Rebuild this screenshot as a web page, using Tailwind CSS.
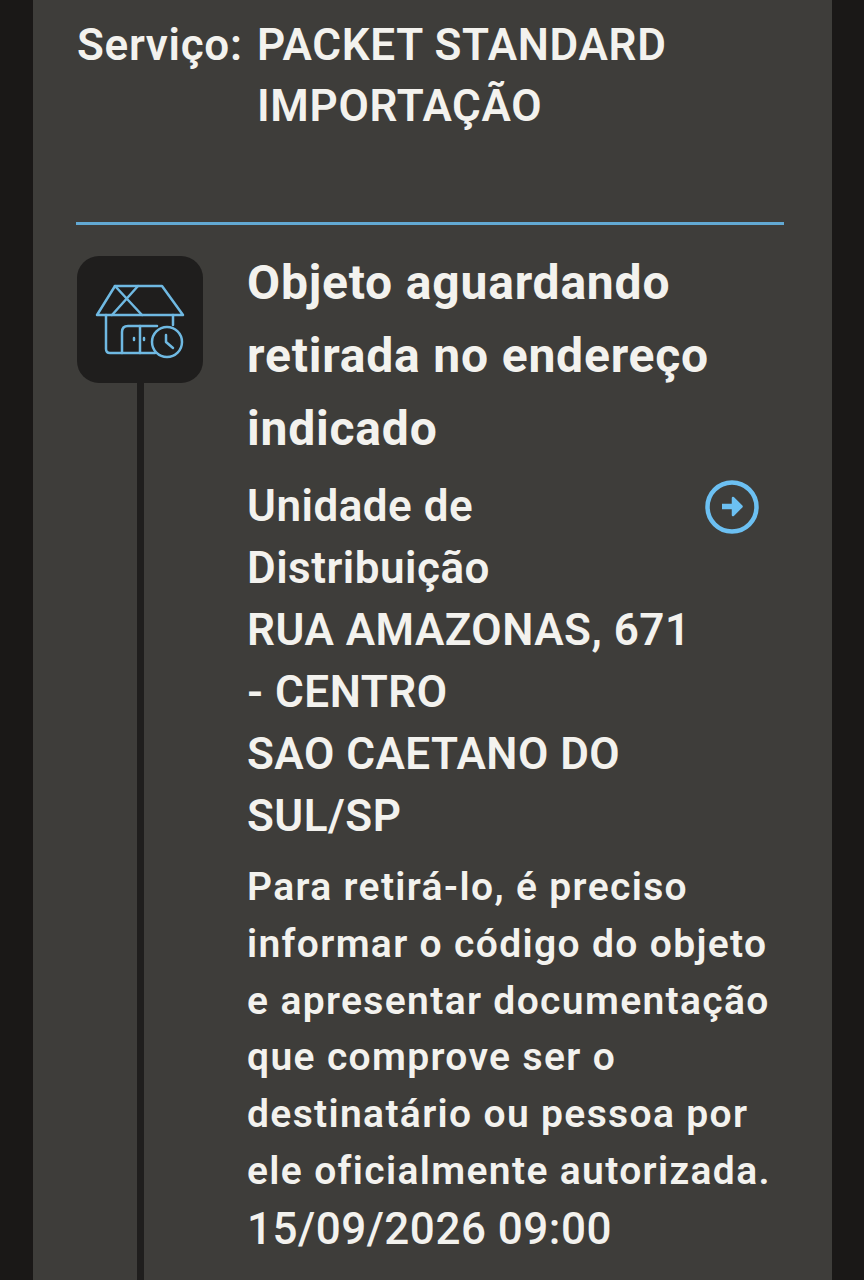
<!DOCTYPE html>
<html lang="pt-BR">

<head>
    <meta charset="UTF-8">
    <meta name="viewport" content="width=device-width, initial-scale=1.0">
    <title>Rastreamento</title>
    <script src="https://cdn.jsdelivr.net/npm/@tailwindcss/browser@4"></script>
</head>

<body class="w-[864px] h-[1280px] overflow-hidden bg-[#1a1817] font-['Roboto',sans-serif] font-semibold text-[#f3f2ee]">
    <div class="ml-[33px] w-[799px] h-[1280px] bg-[#3e3d3a] pl-[44px] pr-[49px] overflow-hidden">
        <div class="flex pt-[15px] text-[44px] leading-[61px] tracking-[0.7px] h-[222px]">
            <span class="w-[180px] shrink-0">Serviço:</span>
            <span class="w-[440px]">PACKET STANDARD IMPORTAÇÃO</span>
        </div>
        <div class="h-[3px] -ml-[1px] -mr-[1px] bg-[#62a9d3]"></div>
        <div class="flex mt-[31px]">
            <div class="w-[126px] shrink-0 flex flex-col items-center">
                <div class="w-[126px] h-[127px] shrink-0 rounded-[22px] bg-[#1f1e1d]">
                    <svg width="126" height="127" viewBox="0 0 126 127" fill="none" stroke="#6fb9e2" stroke-width="2.5" stroke-linecap="round" stroke-linejoin="round">
                        <path d="M20 59 L38 30 H85 L106 59 Z" />
                        <path d="M38 30 L65 59 M61 30 L35 59" />
                        <path d="M29 59 V93 Q29 97 33 97 H78" />
                        <path d="M96 59 V69" />
                        <path d="M45 97 V76 Q45 70 51 70 H80" />
                        <path d="M63 70 V97" />
                        <path d="M57 82 V84 M67 82 V84" />
                        <circle cx="90" cy="86" r="15" fill="#1f1e1d" />
                        <path d="M89 79 V86 L96 92" />
                    </svg>
                </div>
                <div class="w-[7px] h-[1000px] bg-[#1f1e1d]"></div>
            </div>
            <div class="ml-[44px] w-[530px] shrink-0">
                <h2 class="text-[48px] font-bold leading-[73px] tracking-[0.8px] w-[500px] -mt-[10px]">Objeto aguardando retirada no endereço indicado</h2>
                <div class="flex mt-[10px]">
                    <p class="w-[450px] text-[44px] leading-[62px] tracking-[0.5px]">Unidade de<br>Distribuição<br>RUA AMAZONAS, 671<br>- CENTRO<br>SAO CAETANO DO<br>SUL/SP</p>
                    <svg class="ml-[8px] mt-[5px]" width="54" height="54" viewBox="0 0 54 54" fill="none">
                        <circle cx="27" cy="27" r="24.5" stroke="#6cc0f2" stroke-width="4.5" />
                        <path d="M17 26.5 H29" stroke="#6cc0f2" stroke-width="5.5" />
                        <path d="M28 18 L36.5 26.5 L28 35 Z" fill="#6cc0f2" stroke="#6cc0f2" stroke-width="2.5" stroke-linejoin="round" />
                    </svg>
                </div>
                <p class="mt-[12px] text-[39px] leading-[56.8px] tracking-[1.35px]">Para retirá-lo, é preciso informar o código do objeto e apresentar documentação que comprove ser o destinatário ou pessoa por ele oficialmente autorizada.</p>
                <p class="mt-[1px] text-[44px] font-medium leading-[57px] tracking-[0.5px]">15/09/2026 09:00</p>
            </div>
        </div>
    </div>
</body>

</html>
